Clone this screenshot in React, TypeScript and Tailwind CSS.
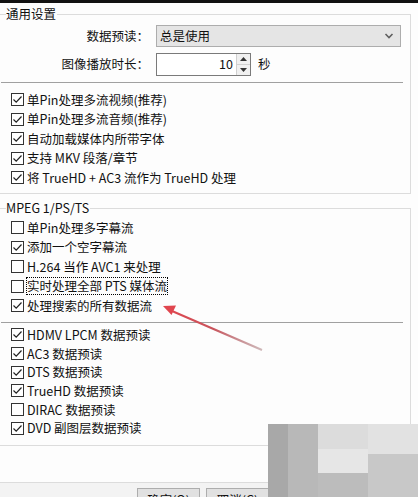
import React from "react";

const Box = ({ checked }: { checked: boolean }) => (
  <span className="flex h-[13px] w-[13px] shrink-0 items-center justify-center border border-[#333333] bg-white">
    {checked && (
      <svg width="11" height="11" viewBox="0 0 11 11">
        <path d="M1.5 5.5 L4.2 8.2 L9.5 2.5" fill="none" stroke="#222" strokeWidth="1.2" />
      </svg>
    )}
  </span>
);

const Check = ({
  checked,
  label,
  focus,
  h = "h-[19.5px]",
}: {
  checked: boolean;
  label: string;
  focus?: boolean;
  h?: string;
}) => (
  <div className={`flex items-center pl-[11px] ${h}`}>
    <Box checked={checked} />
    <span
      className={`ml-[3px] leading-[16px] ${
        focus ? "outline outline-1 outline-dotted outline-black" : ""
      }`}
    >
      {label}
    </span>
  </div>
);

export default function App() {
  return (
    <div
      className="relative h-[497px] w-[418px] overflow-hidden bg-[#fdfdfd] text-[12.5px] text-[#111]"
      style={{ fontFamily: '"Noto Sans CJK SC", "Noto Sans", sans-serif' }}
    >
      <div className="h-[3px] bg-[#111111]" />

      {/* 通用设置 */}
      <div className="relative ml-[-1px] mt-[11px] h-[180px] w-[412px] border border-[#dcdcdc]">
        <span className="absolute left-[6px] top-[-9px] bg-[#fdfdfd] pr-[1px] leading-[16px]">通用设置</span>
        <div className="mt-[10px] flex items-center">
          <span className="w-[149px] text-right">数据预读：</span>
          <div className="ml-[7px] flex h-[22px] w-[245px] items-center justify-between border border-[#adadad] bg-[#e5e5e5] pl-[3px] pr-[6px]">
            <span>总是使用</span>
            <svg width="10" height="8" viewBox="0 0 10 8">
              <path d="M1.5 2 L5 5.5 L8.5 2" fill="none" stroke="#606060" strokeWidth="1.6" />
            </svg>
          </div>
        </div>
        <div className="mt-[6px] flex items-center">
          <span className="w-[149px] text-right">图像播放时长：</span>
          <div className="ml-[7px] flex h-[23px] w-[95px] items-center border border-[#7a7a7a] bg-white">
            <span className="flex-1 pr-[3px] text-right">10</span>
            <div className="flex h-full w-[14px] flex-col border-l border-[#d0d0d0]">
              <div className="flex flex-1 items-center justify-center border-b border-[#d0d0d0] bg-[#f0f0f0]">
                <svg width="7" height="4" viewBox="0 0 7 4">
                  <path d="M0 4 L3.5 0 L7 4 Z" fill="#333" />
                </svg>
              </div>
              <div className="flex flex-1 items-center justify-center bg-[#f0f0f0]">
                <svg width="7" height="4" viewBox="0 0 7 4">
                  <path d="M0 0 L3.5 4 L7 0 Z" fill="#333" />
                </svg>
              </div>
            </div>
          </div>
          <span className="ml-[7px]">秒</span>
        </div>
        <div className="ml-[1px] mt-[6px] h-px w-[402px] bg-[#a0a0a0]" />
        <div className="mt-[7px]">
          <Check checked label="单Pin处理多流视频(推荐)" />
          <Check checked label="单Pin处理多流音频(推荐)" />
          <Check checked label="自动加载媒体内所带字体" />
          <Check checked label="支持 MKV 段落/章节" />
          <Check checked label="将 TrueHD + AC3 流作为 TrueHD 处理" />
        </div>
      </div>

      {/* MPEG 1/PS/TS */}
      <div className="relative ml-[-1px] mt-[14px] h-[238px] w-[412px] border border-[#dcdcdc]">
        <span className="absolute left-[6px] top-[-9px] bg-[#fdfdfd] pr-[1px] leading-[16px]">MPEG 1/PS/TS</span>
        <div className="mt-[9px]">
          <Check checked={false} label="单Pin处理多字幕流" />
          <Check checked label="添加一个空字幕流" />
          <Check checked={false} label="H.264 当作 AVC1 来处理" />
          <Check checked={false} label="实时处理全部 PTS 媒体流" focus />
          <Check checked label="处理搜索的所有数据流" />
        </div>
        <div className="ml-[1px] mt-[6px] h-px w-[402px] bg-[#a0a0a0]" />
        <div className="mt-[3px]">
          <Check checked label="HDMV LPCM 数据预读" h="h-[18.7px]" />
          <Check checked label="AC3 数据预读" h="h-[18.7px]" />
          <Check checked label="DTS 数据预读" h="h-[18.7px]" />
          <Check checked label="TrueHD 数据预读" h="h-[18.7px]" />
          <Check checked={false} label="DIRAC 数据预读" h="h-[18.7px]" />
          <Check checked label="DVD 副图层数据预读" h="h-[18.7px]" />
        </div>
      </div>

      {/* footer */}
      <div className="mt-[36px] h-px bg-[#dcdcdc]" />
      <div className="flex h-[20px] gap-[6px] bg-[#f3f3f3] pl-[137px] pt-[5px]">
        <button className="h-[23px] w-[63px] shrink-0 border border-[#adadad] bg-[#e1e1e1] text-[12.5px] leading-[18px]">确定(O)</button>
        <button className="h-[23px] w-[63px] shrink-0 border border-[#adadad] bg-[#e1e1e1] text-[12.5px] leading-[18px]">取消(C)</button>
      </div>

      {/* watermark */}
      <div className="absolute left-[268px] top-[424px] flex h-[73px] w-[150px] bg-[#c4c4c4]">
        <div className="h-full w-[20px] bg-[#a8a8a8]" />
        <div className="h-full w-[30px] bg-[#b8b8b8]" />
        <div className="flex h-full w-[50px] flex-col">
          <div className="h-[25px] bg-[#dcdcdc]" />
          <div className="h-[24px] bg-[#e6e6e6]" />
          <div className="flex-1 bg-[#bcbcbc]" />
        </div>
        <div className="flex h-full flex-1 flex-col">
          <div className="h-[30px] bg-[#e2e2e2]" />
          <div className="flex-1 bg-[#c8c8c8]" />
        </div>
      </div>

      {/* red arrow */}
      <svg className="pointer-events-none absolute left-0 top-0" width="418" height="497">
        <defs>
          <linearGradient id="ar" x1="262" y1="350" x2="165" y2="307" gradientUnits="userSpaceOnUse">
            <stop offset="0" stopColor="#b08a8c" stopOpacity="0.6" />
            <stop offset="0.5" stopColor="#c9545c" />
            <stop offset="1" stopColor="#e0464f" />
          </linearGradient>
        </defs>
        <line x1="262" y1="350" x2="172" y2="311" stroke="url(#ar)" strokeWidth="2" />
        <path d="M163 306 L176 305.5 L171.5 315 Z" fill="#e0464f" />
      </svg>
    </div>
  );
}
